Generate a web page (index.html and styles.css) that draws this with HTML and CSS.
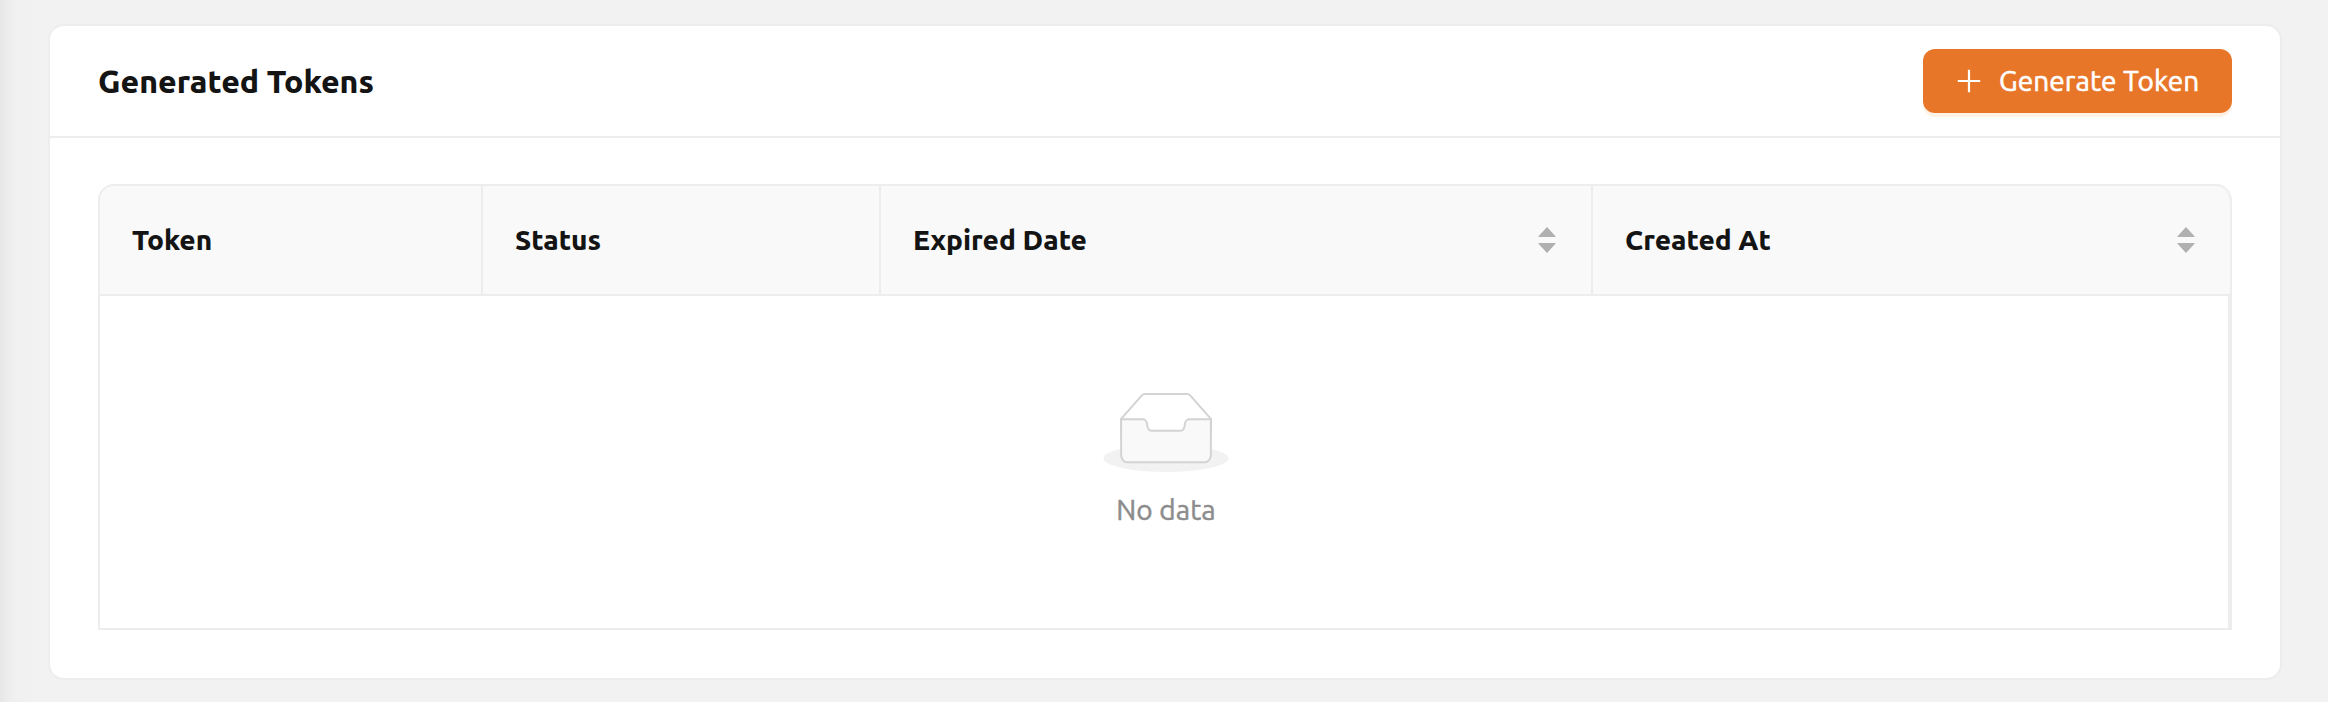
FILE: index.html
```html
<!DOCTYPE html>
<html lang="en">
<head>
<meta charset="utf-8">
<title>Generated Tokens</title>
<link rel="stylesheet" href="styles.css">
</head>
<body>
<main class="page">
  <section class="card">
    <header class="card-header">
      <h1 class="card-title">Generated Tokens</h1>
      <button class="button" type="button">
        <svg class="button-icon" viewBox="0 0 24 24" aria-hidden="true"><path d="M12 .8v22.4M.8 12h22.4" fill="none" stroke="#fff" stroke-width="2.2"/></svg>
        <span class="button-label">Generate Token</span>
      </button>
    </header>
    <div class="card-body">
      <div class="table">
        <div class="table-head">
          <div class="cell"><span>Token</span></div>
          <div class="cell"><span>Status</span></div>
          <div class="cell"><span>Expired Date</span>
            <svg class="sorter" viewBox="0 0 17 26" aria-hidden="true"><path d="M8.5 0 17 9.2v.8H0v-.8zM8.5 26 17 16.8V16H0v.8z"/></svg>
          </div>
          <div class="cell"><span>Created At</span>
            <svg class="sorter" viewBox="0 0 17 26" aria-hidden="true"><path d="M8.5 0 17 9.2v.8H0v-.8zM8.5 26 17 16.8V16H0v.8z"/></svg>
          </div>
        </div>
        <div class="table-empty">
          <svg class="empty-icon" viewBox="0 0 64 41" aria-hidden="true">
            <g transform="translate(0 1)" fill="none" fill-rule="evenodd">
              <ellipse fill="#f2f2f2" cx="32" cy="33" rx="32" ry="7"/>
              <g fill-rule="nonzero" stroke="#d3d3d3">
                <path fill="#fff" d="M55 12.76L44.854 1.258C44.367.474 43.656 0 42.907 0H21.093c-.749 0-1.46.474-1.947 1.257L9 12.761V22h46v-9.24z"/>
                <path fill="#f9f9f9" d="M41.613 15.931c0-1.605.994-2.93 2.227-2.931H55v18.137C55 33.26 53.68 35 52.05 35h-40.1C10.32 35 9 33.259 9 31.137V13h11.16c1.233 0 2.227 1.323 2.227 2.928v.022c0 1.605 1.005 2.901 2.237 2.901h14.752c1.232 0 2.237-1.308 2.237-2.913v-.007z"/>
              </g>
            </g>
          </svg>
          <p class="empty-text">No data</p>
        </div>
      </div>
    </div>
  </section>
</main>
</body>
</html>
```

FILE: styles.css
```css
* {
  box-sizing: border-box;
}

body {
  margin: 0;
  background: #f2f2f2;
  color: #141414;
  font-family: Ubuntu, "Noto Sans", sans-serif;
  font-size: 28px;
  line-height: 44px;
}

.page {
  height: 702px;
  padding: 24px 46px 22px 48px;
  background: linear-gradient(90deg, #e7e7e7 0, #ececec 7px, #f0f0f0 15px, #f2f2f2 36px);
}

.card {
  height: 656px;
  background: #fff;
  border: 2px solid #ededed;
  border-radius: 16px;
}

.card-header {
  display: flex;
  align-items: center;
  justify-content: space-between;
  height: 112px;
  padding: 0 48px;
  border-bottom: 2px solid #ededed;
}

.card-title {
  margin: 0;
  font-size: 32px;
  font-weight: 800;
}

.button {
  display: flex;
  align-items: center;
  width: 309px;
  height: 64px;
  padding: 0 0 0 34px;
  border: 0;
  border-radius: 12px;
  background: #e87629;
  box-shadow: 0 4px 0 #fef1e6;
  color: #fff;
  font: inherit;
}

.button-icon {
  width: 24px;
  height: 24px;
  margin-right: 18px;
}

.button-label {
  letter-spacing: 0.1px;
  -webkit-text-stroke: 0.6px currentColor;
  white-space: nowrap;
}

.card-body {
  padding: 46px 48px;
}

.table {
  height: 446px;
}

.table-head {
  display: grid;
  grid-template-columns: 383px 398px 712px 1fr;
  height: 112px;
  background: #f9f9f9;
  border: 2px solid #ededed;
  border-right: 0;
  border-radius: 16px 16px 0 0;
}

.cell {
  display: flex;
  align-items: center;
  justify-content: space-between;
  padding: 0 35px 0 32px;
  border-right: 2px solid #ededed;
  font-weight: 800;
  white-space: nowrap;
}

.cell:last-child {
  border-radius: 0 16px 0 0;
}

.sorter {
  width: 18px;
  height: 26px;
  fill: #b0b0b0;
}

.table-empty {
  display: flex;
  flex-direction: column;
  align-items: center;
  height: 334px;
  padding: 96px 0 0 4px;
  border: solid #ededed;
  border-width: 0 4px 2px 2px;
}

.empty-icon {
  width: 128px;
  height: 80px;
}

.empty-text {
  margin: 16px 0 0;
  color: #8c8c8c;
  letter-spacing: 0.1px;
  -webkit-text-stroke: 0.5px currentColor;
}
```
